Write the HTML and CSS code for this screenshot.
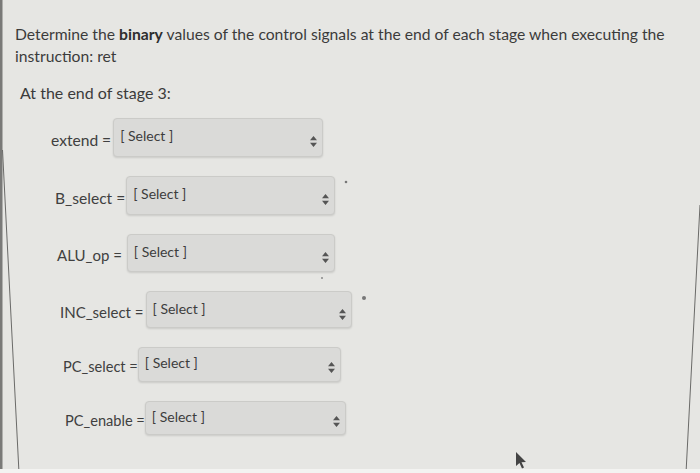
FILE: index.html
```html
<!DOCTYPE html>
<html lang="en">
<head>
<meta charset="utf-8">
<link rel="stylesheet" href="styles.css">
</head>
<body>
<div class="page">
  <p class="intro">Determine the <b>binary</b> values of the control signals at the end of each stage when executing the instruction: ret</p>
  <p class="stage">At the end of stage 3:</p>
  <div class="rows">
    <div class="row r1"><span class="label">extend =</span><div class="sel"><span>[ Select ]</span><svg class="arr" width="7" height="11" viewBox="0 0 7 11"><path d="M3.5 0L7 4.3H0Z M0 6.7H7L3.5 11Z" fill="#555"/></svg></div></div>
    <div class="row r2"><span class="label">B_select =</span><div class="sel"><span>[ Select ]</span><svg class="arr" width="7" height="11" viewBox="0 0 7 11"><path d="M3.5 0L7 4.3H0Z M0 6.7H7L3.5 11Z" fill="#555"/></svg></div></div>
    <div class="row r3"><span class="label">ALU_op =</span><div class="sel"><span>[ Select ]</span><svg class="arr" width="7" height="11" viewBox="0 0 7 11"><path d="M3.5 0L7 4.3H0Z M0 6.7H7L3.5 11Z" fill="#555"/></svg></div></div>
    <div class="row r4"><span class="label">INC_select =</span><div class="sel"><span>[ Select ]</span><svg class="arr" width="7" height="11" viewBox="0 0 7 11"><path d="M3.5 0L7 4.3H0Z M0 6.7H7L3.5 11Z" fill="#555"/></svg></div></div>
    <div class="row r5"><span class="label">PC_select =</span><div class="sel"><span>[ Select ]</span><svg class="arr" width="7" height="11" viewBox="0 0 7 11"><path d="M3.5 0L7 4.3H0Z M0 6.7H7L3.5 11Z" fill="#555"/></svg></div></div>
    <div class="row r6"><span class="label">PC_enable =</span><div class="sel"><span>[ Select ]</span><svg class="arr" width="7" height="11" viewBox="0 0 7 11"><path d="M3.5 0L7 4.3H0Z M0 6.7H7L3.5 11Z" fill="#555"/></svg></div></div>
  </div>
</div>
<svg class="edges" width="700" height="473" viewBox="0 0 700 473">
  <rect x="0" y="0" width="2.5" height="473" fill="#7a7a78"/>
  <line x1="2.5" y1="150" x2="19" y2="473" stroke="#6a6a68" stroke-width="1"/>
  <line x1="700" y1="205" x2="686" y2="473" stroke="#6a6a68" stroke-width="1"/>
  <rect x="0" y="469" width="700" height="4" fill="#f3f3f1"/>
  <path d="M516 452 L516 466 L519.5 463 L522 468.5 L524 467.5 L521.5 462.2 L526 462 Z" fill="#444"/>
  <circle cx="346" cy="182" r="1.3" fill="#777"/>
  <circle cx="364" cy="298" r="2" fill="#777"/>
  <circle cx="322" cy="278" r="1" fill="#888"/>
</svg>
</body>
</html>
```
FILE: styles.css
```css
html, body {
  margin: 0;
  padding: 0;
}
body {
  width: 700px;
  height: 473px;
  overflow: hidden;
  background: #e6e6e3;
  font-family: Lato, "Open Sans", sans-serif;
  color: #3b3b3b;
  position: relative;
}
.page {
  padding: 23px 0 0 15px;
}
.intro {
  margin: 0;
  width: 670px;
  font-size: 15.7px;
  line-height: 22px;
}
.intro b {
  font-weight: 700;
  color: #2e2e2e;
}
.stage {
  margin: 15px 0 0 5px;
  font-size: 16px;
  line-height: 22px;
}
.rows {
  margin-top: 14px;
  display: flex;
  flex-direction: column;
  gap: 19px;
}
.row {
  display: flex;
  align-items: center;
  height: 39px;
}
.label {
  font-size: 15.6px;
  color: #404040;
  margin-right: 2px;
  margin-top: 4px;
  white-space: nowrap;
}
.sel {
  box-sizing: border-box;
  height: 39px;
  background: #dadad8;
  border: 1px solid #cbcbc8;
  border-radius: 4px;
  box-shadow: 0 1px 2px rgba(0,0,0,0.12);
  display: flex;
  align-items: flex-start;
  justify-content: space-between;
  padding: 8px 5px 0 6px;
  font-size: 14px;
  color: #3d3d3d;
}
.sel span {
  line-height: 18px;
}
.arr {
  margin-top: 9px;
}
.r1 { margin-left: 36px; }
.r1 .sel { width: 210px; }
.r2 { margin-left: 40px; }
.r2 .label { margin-right: 1px; }
.r2 .sel { width: 209px; }
.r3 { margin-left: 42px; height: 38px; }
.r3 .label { font-size: 15px; margin-right: 5px; }
.r3 .sel { width: 208px; height: 38px; }
.r4 { margin-left: 45px; height: 37px; }
.r4 .label { font-size: 15px; margin-right: 2px; }
.r4 .sel { width: 206px; height: 37px; }
.r5 { margin-left: 48px; height: 35px; }
.r5 .label { font-size: 14.6px; margin-right: 0; }
.r5 .sel { width: 203px; height: 35px; padding-top: 6px; }
.r6 { margin-left: 50px; height: 34px; }
.r6 .label { font-size: 14.6px; margin-right: 0; }
.r6 .sel { width: 201px; height: 34px; padding-top: 6px; }
.r5 .arr, .r6 .arr { margin-top: 8px; }
.edges {
  position: absolute;
  left: 0;
  top: 0;
  pointer-events: none;
}
```
